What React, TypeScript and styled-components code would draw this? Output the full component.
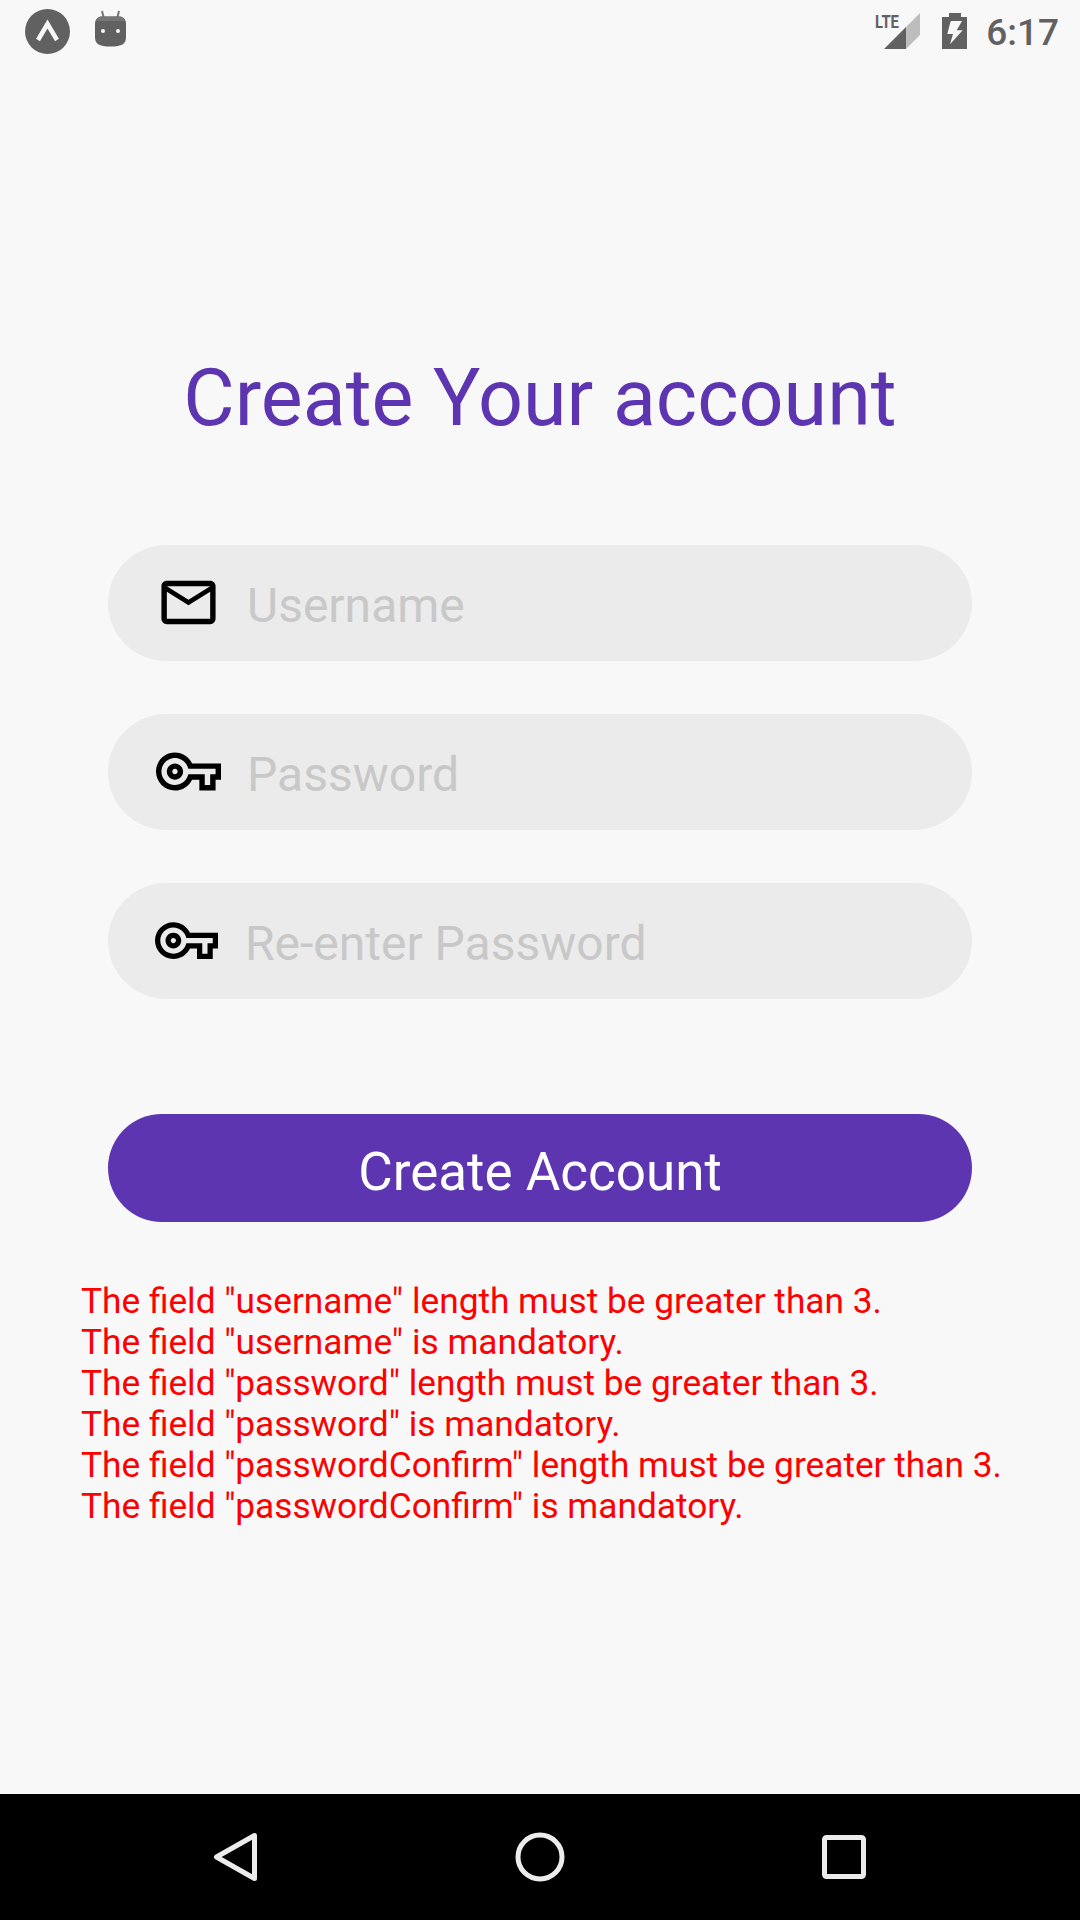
import React from 'react';
import styled, { createGlobalStyle } from 'styled-components';

const GlobalStyle = createGlobalStyle`
  html, body {
    margin: 0;
    padding: 0;
    background: #f8f8f8;
  }
  * {
    box-sizing: border-box;
  }
`;

const Screen = styled.div`
  display: flex;
  flex-direction: column;
  width: 1080px;
  height: 1920px;
  background: #f8f8f8;
  font-family: Roboto, "Liberation Sans", sans-serif;
`;

const StatusBar = styled.div`
  display: flex;
  align-items: flex-start;
  justify-content: space-between;
  height: 60px;
  padding: 9px 21px 0 25px;
  flex-shrink: 0;
`;

const StatusGroup = styled.div`
  display: flex;
  align-items: flex-start;
`;

const Clock = styled.span`
  margin-left: 19px;
  margin-top: 3px;
  color: #616161;
  font-size: 37px;
  font-weight: 500;
  line-height: 42px;
`;

const Content = styled.main`
  display: flex;
  flex: 1;
  flex-direction: column;
  align-items: center;
`;

const Title = styled.h1`
  margin: 296px 0 0;
  color: #5e35b1;
  font-size: 79px;
  font-weight: 400;
  line-height: 84px;
`;

const Form = styled.form`
  display: flex;
  flex-direction: column;
  gap: 53.5px;
  width: 864px;
  margin-top: 105px;
`;

const Field = styled.label`
  display: flex;
  align-items: center;
  height: 115.5px;
  padding-left: 48px;
  border-radius: 58px;
  background: #ebebeb;
`;

const FieldIcon = styled.svg<{ $size: number; $shift?: number }>`
  width: ${({ $size }) => $size}px;
  height: ${({ $size }) => $size}px;
  margin-left: ${({ $shift = 0 }) => $shift}px;
  flex-shrink: 0;
  fill: #000;
`;

const FieldInput = styled.input<{ $offset?: number }>`
  flex: 1;
  min-width: 0;
  margin-left: ${({ $offset = 26 }) => $offset}px;
  padding: 5px 0 0;
  border: 0;
  outline: none;
  background: transparent;
  font-family: inherit;
  font-size: 48px;

  &::placeholder {
    color: #c8c8c8;
    opacity: 1;
  }
`;

const SubmitButton = styled.button`
  width: 864px;
  height: 108px;
  margin-top: 115.5px;
  padding: 7px 0 0;
  border: 0;
  border-radius: 54px;
  background: #5e35b1;
  color: #fff;
  font-family: inherit;
  font-size: 53px;
  cursor: pointer;
`;

const Errors = styled.div`
  align-self: stretch;
  margin-top: 59px;
  padding-left: 81px;
  color: #ff0000;
  font-size: 35.25px;
  line-height: 41px;
`;

const NavBar = styled.nav`
  display: flex;
  align-items: center;
  justify-content: center;
  height: 126px;
  background: #000;
  flex-shrink: 0;
`;

const NavIcon = styled.svg`
  width: 60px;
  height: 60px;
  fill: none;
  stroke: #ececec;
  stroke-width: 5;
  stroke-linejoin: round;
`;

const NavSlot = styled.div`
  display: flex;
  justify-content: center;
  width: 304px;
`;

const MAIL_PATH =
  'M20 4H4c-1.1 0-1.99.9-1.99 2L2 18c0 1.1.9 2 2 2h16c1.1 0 2-.9 2-2V6c0-1.1-.9-2-2-2zm0 14H4V8l8 5 8-5v10zm-8-7L4 6h16l-8 5z';
const KEY_PATH =
  'M22 19h-6v-4h-2.68c-1.14 2.42-3.6 4-6.32 4-3.86 0-7-3.14-7-7s3.14-7 7-7c2.72 0 5.17 1.58 6.32 4H24v6h-2v4zm-4-2h2v-4h2v-2H11.94l-.23-.67C11.01 8.34 9.11 7 7 7c-2.76 0-5 2.24-5 5s2.24 5 5 5c2.11 0 4.01-1.34 4.71-3.33l.23-.67H18v4zM7 15c-1.65 0-3-1.35-3-3s1.35-3 3-3 3 1.35 3 3-1.35 3-3 3zm0-4c-.55 0-1 .45-1 1s.45 1 1 1 1-.45 1-1-.45-1-1-1z';

const ERRORS = [
  'The field "username" length must be greater than 3.',
  'The field "username" is mandatory.',
  'The field "password" length must be greater than 3.',
  'The field "password" is mandatory.',
  'The field "passwordConfirm" length must be greater than 3.',
  'The field "passwordConfirm" is mandatory.',
];

const ExpoBadge = () => (
  <svg width="45" height="45" viewBox="0 0 45 45">
    <circle cx="22.5" cy="22.5" r="22.5" fill="#616161" />
    <path d="M13 31 L22.5 15 L32 31" fill="none" stroke="#f8f8f8" strokeWidth="4.5" />
  </svg>
);

const AndroidBadge = () => (
  <svg width="32" height="37" viewBox="0 0 32 37" style={{ marginLeft: 25, marginTop: 1 }}>
    <path d="M7 1 L8.5 7 M24 1 L22.5 7" stroke="#757575" strokeWidth="2" />
    <path
      d="M7 6.5 H24 C28 6.5 31 9 31 14 V27 C31 34 27 36.5 15.5 36.5 C4 36.5 0 34 0 27 V14 C0 9 3 6.5 7 6.5 Z"
      fill="#616161"
    />
    <path d="M1 11 C2 8 4 6.5 7 6.5 H24 C27 6.5 29 8 30 11 Z" fill="#757575" />
    <circle cx="8" cy="21" r="2" fill="#f8f8f8" />
    <circle cx="23" cy="21" r="2" fill="#f8f8f8" />
  </svg>
);

const LteBadge = () => (
  <svg width="46" height="41" viewBox="0 0 46 41">
    <path d="M31 40 L45 26 V4 L31 18 Z" fill="#bdbdbd" />
    <path d="M9 40 L31 18 V40 Z" fill="#616161" />
    <text
      x="0"
      y="19"
      fontFamily="Roboto, sans-serif"
      fontSize="18"
      fontWeight="700"
      fill="#616161"
      textLength="24"
      lengthAdjust="spacingAndGlyphs"
    >
      LTE
    </text>
  </svg>
);

const BatteryBadge = () => (
  <svg width="25" height="37" viewBox="0 0 25 37" style={{ marginLeft: 21, marginTop: 4 }}>
    <path
      fillRule="evenodd"
      d="M7 0 H19 V4 H25 V36 H0 V4 H7 Z M8.7 8 H20 L14.7 17.3 H20.7 L8 31.3 L11 21 H5.3 Z"
      fill="#616161"
    />
  </svg>
);

const App: React.FC = () => {
  return (
    <Screen>
      <GlobalStyle />
      <StatusBar>
        <StatusGroup>
          <ExpoBadge />
          <AndroidBadge />
        </StatusGroup>
        <StatusGroup>
          <LteBadge />
          <BatteryBadge />
          <Clock>6:17</Clock>
        </StatusGroup>
      </StatusBar>
      <Content>
        <Title>Create Your account</Title>
        <Form>
          <Field>
            <FieldIcon $size={65} viewBox="0 0 24 24">
              <path d={MAIL_PATH} />
            </FieldIcon>
            <FieldInput placeholder="Username" />
          </Field>
          <Field>
            <FieldIcon $size={65} viewBox="0 0 24 24">
              <path d={KEY_PATH} />
            </FieldIcon>
            <FieldInput placeholder="Password" />
          </Field>
          <Field>
            <FieldIcon $size={63} $shift={-1} viewBox="0 0 24 24">
              <path d={KEY_PATH} />
            </FieldIcon>
            <FieldInput $offset={27} placeholder="Re-enter Password" />
          </Field>
        </Form>
        <SubmitButton type="button">Create Account</SubmitButton>
        <Errors>
          {ERRORS.map((line) => (
            <div key={line}>{line}</div>
          ))}
        </Errors>
      </Content>
      <NavBar>
        <NavSlot>
          <NavIcon viewBox="0 0 60 60">
            <path d="M10.5 30 L48.5 8.5 V51.5 Z" />
          </NavIcon>
        </NavSlot>
        <NavSlot>
          <NavIcon viewBox="0 0 60 60">
            <circle cx="30" cy="30" r="22" />
          </NavIcon>
        </NavSlot>
        <NavSlot>
          <NavIcon viewBox="0 0 60 60">
            <rect x="10.5" y="10.5" width="39" height="39" rx="2" />
          </NavIcon>
        </NavSlot>
      </NavBar>
    </Screen>
  );
};

export default App;
